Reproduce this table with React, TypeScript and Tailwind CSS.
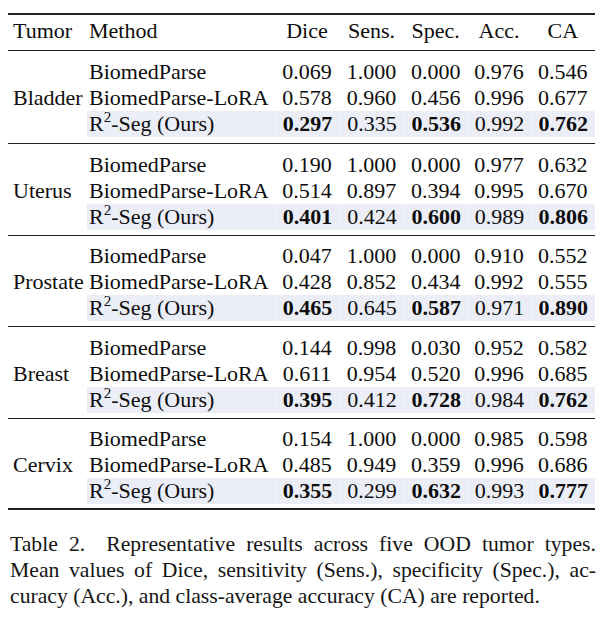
import React from "react";

type Row = { method: React.ReactNode; vals: string[]; bold?: boolean[]; hl?: boolean };
type Group = { tumor: string; rows: Row[]; pt: string; pb: string };

const R2 = (
  <span>
    R<sup className="text-[15px] top-[-0.6em]">2</sup>-Seg (Ours)
  </span>
);

const B = [true, false, true, false, true];

const groups: Group[] = [
  {
    tumor: "Bladder",
    pt: "pt-[8px]",
    pb: "pb-[6px]",
    rows: [
      { method: "BiomedParse", vals: ["0.069", "1.000", "0.000", "0.976", "0.546"] },
      { method: "BiomedParse-LoRA", vals: ["0.578", "0.960", "0.456", "0.996", "0.677"] },
      { method: R2, vals: ["0.297", "0.335", "0.536", "0.992", "0.762"], bold: B, hl: true },
    ],
  },
  {
    tumor: "Uterus",
    pt: "pt-[8px]",
    pb: "pb-[5px]",
    rows: [
      { method: "BiomedParse", vals: ["0.190", "1.000", "0.000", "0.977", "0.632"] },
      { method: "BiomedParse-LoRA", vals: ["0.514", "0.897", "0.394", "0.995", "0.670"] },
      { method: R2, vals: ["0.401", "0.424", "0.600", "0.989", "0.806"], bold: B, hl: true },
    ],
  },
  {
    tumor: "Prostate",
    pt: "pt-[7px]",
    pb: "pb-[5px]",
    rows: [
      { method: "BiomedParse", vals: ["0.047", "1.000", "0.000", "0.910", "0.552"] },
      { method: "BiomedParse-LoRA", vals: ["0.428", "0.852", "0.434", "0.992", "0.555"] },
      { method: R2, vals: ["0.465", "0.645", "0.587", "0.971", "0.890"], bold: B, hl: true },
    ],
  },
  {
    tumor: "Breast",
    pt: "pt-[8px]",
    pb: "pb-[5px]",
    rows: [
      { method: "BiomedParse", vals: ["0.144", "0.998", "0.030", "0.952", "0.582"] },
      { method: "BiomedParse-LoRA", vals: ["0.611", "0.954", "0.520", "0.996", "0.685"] },
      { method: R2, vals: ["0.395", "0.412", "0.728", "0.984", "0.762"], bold: B, hl: true },
    ],
  },
  {
    tumor: "Cervix",
    pt: "pt-[7px]",
    pb: "pb-[4px]",
    rows: [
      { method: "BiomedParse", vals: ["0.154", "1.000", "0.000", "0.985", "0.598"] },
      { method: "BiomedParse-LoRA", vals: ["0.485", "0.949", "0.359", "0.996", "0.686"] },
      { method: R2, vals: ["0.355", "0.299", "0.632", "0.993", "0.777"], bold: B, hl: true },
    ],
  },
];

const gridCols = "grid grid-cols-[79px_188px_64px_65px_63.5px_63px_64.5px]";

export default function App() {
  return (
    <div className="w-[611px] h-[618px] bg-white font-['Liberation_Serif',serif] text-[#0d0d0d] overflow-hidden">
      <div className="pt-[13px] pl-[8px] w-[595px]">
        <div className="h-[2px] bg-[#222]" />
        <div className={`${gridCols} h-[35px] pt-[3px] text-[22px] leading-[26px]`}>
          <div className="pl-[5px]">Tumor</div>
          <div className="pl-[2px]">Method</div>
          <div className="text-center">Dice</div>
          <div className="text-center">Sens.</div>
          <div className="text-center">Spec.</div>
          <div className="text-center">Acc.</div>
          <div className="text-center">CA</div>
        </div>
        <div className="h-px bg-[#222]" />
        {groups.map((g, gi) => (
          <div key={g.tumor}>
            {gi > 0 && <div className="h-px bg-[#222]" />}
            <div className={`${g.pt} ${g.pb} text-[22px] leading-[26px]`}>
              {g.rows.map((r, ri) => (
                <div key={ri} className={`${gridCols} h-[26px]`}>
                  <div className="pl-[5px]">{ri === 1 ? g.tumor : ""}</div>
                  <div className={`pl-[2px] whitespace-nowrap ${r.hl ? "bg-[#eceef7]" : ""}`}>{r.method}</div>
                  {r.vals.map((v, vi) => (
                    <div
                      key={vi}
                      className={`text-center ${r.hl ? "bg-[#eceef7] border-l border-[#f3f4fa]" : ""} ${
                        r.bold && r.bold[vi] ? "font-bold" : ""
                      }`}
                    >
                      {v}
                    </div>
                  ))}
                </div>
              ))}
            </div>
          </div>
        ))}
        <div className="h-[2px] bg-[#222]" />
      </div>
      <div className="mt-[21px] pl-[10px] w-[596px] text-[21.7px] leading-[26px] text-[#151515]">
        <div className="whitespace-nowrap flex justify-between">
          <span>Table</span>
          <span>2.<span className="inline-block w-[10px]" /></span>
          <span>Representative</span>
          <span>results</span>
          <span>across</span>
          <span>five</span>
          <span>OOD</span>
          <span>tumor</span>
          <span>types.</span>
        </div>
        <div className="text-justify [text-align-last:justify] whitespace-nowrap">
          Mean values of Dice, sensitivity (Sens.), specificity (Spec.), ac-
        </div>
        <div className="whitespace-nowrap">curacy (Acc.), and class-average accuracy (CA) are reported.</div>
      </div>
    </div>
  );
}
